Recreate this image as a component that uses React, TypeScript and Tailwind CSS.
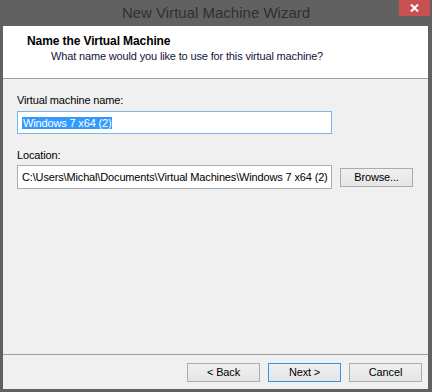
import { useState } from 'react'

const FONT = "font-['Liberation_Sans',Arial,sans-serif]"

function WinButton({ label, primary }: { label: string; primary?: boolean }) {
  return (
    <button
      className={`w-[73px] h-[19px] border text-[11px] leading-none text-black bg-gradient-to-b from-[#f0f0f0] to-[#e5e5e5] ${
        primary ? 'border-[#3c8df0]' : 'border-[#acacac]'
      }`}
    >
      {label}
    </button>
  )
}

export default function App() {
  const [name] = useState('Windows 7 x64 (2)')
  const [location] = useState('C:\\Users\\Michal\\Documents\\Virtual Machines\\Windows 7 x64 (2)')

  return (
    <div className={`w-[432px] h-[392px] bg-[#616161] flex flex-col ${FONT}`}>
      {/* title bar */}
      <div className="relative h-[26px] flex items-center justify-center">
        <span className="text-[15px] text-[#303030] leading-none mb-[1px]">New Virtual Machine Wizard</span>
        <button className="absolute right-[2px] top-0 w-[31px] h-[16px] bg-[#c75050] flex items-center justify-center">
          <svg width="9" height="8" viewBox="0 0 9 8">
            <path d="M1 0.5 L8 7.5 M8 0.5 L1 7.5" stroke="#fff" strokeWidth="2" />
          </svg>
        </button>
      </div>

      <div className="flex-1 ml-[3px] mr-[4px] mb-[3px] bg-[#f0f0f0] flex flex-col tracking-[-0.15px]">
        {/* header */}
        <div className="h-[53px] bg-white border-b border-[#a0a0a0] pt-[8px] leading-[15px]">
          <div className="pl-[24px] text-[12px] font-bold text-black tracking-[-0.1px]">Name the Virtual Machine</div>
          <div className="pl-[48px] text-[11px] text-[#14143a]">What name would you like to use for this virtual machine?</div>
        </div>

        {/* body */}
        <div className="flex-1 px-[14px] pt-[14px] text-[11px] leading-[14px] text-black">
          <div>Virtual machine name:</div>
          <div className="mt-[4px] w-[315px] h-[23px] border border-[#7eb4ea] bg-white flex items-center pl-[4px]">
            <span className="bg-[#3399ff] text-white leading-[12px] pl-[1px]">{name}</span>
          </div>

          <div className="mt-[14px]">Location:</div>
          <div className="mt-[3px] flex items-center gap-[8px]">
            <div className="w-[315px] h-[24px] border border-[#abadb3] bg-white flex items-center pl-[4px] whitespace-nowrap overflow-hidden">
              {location}
            </div>
            <WinButton label="Browse..." />
          </div>
        </div>

        {/* footer */}
        <div className="h-[35px] border-t border-[#a0a0a0] flex justify-end gap-[8px] pt-[8px] pr-[6px]">
          <WinButton label="< Back" />
          <WinButton label="Next >" primary />
          <WinButton label="Cancel" />
        </div>
      </div>
    </div>
  )
}
